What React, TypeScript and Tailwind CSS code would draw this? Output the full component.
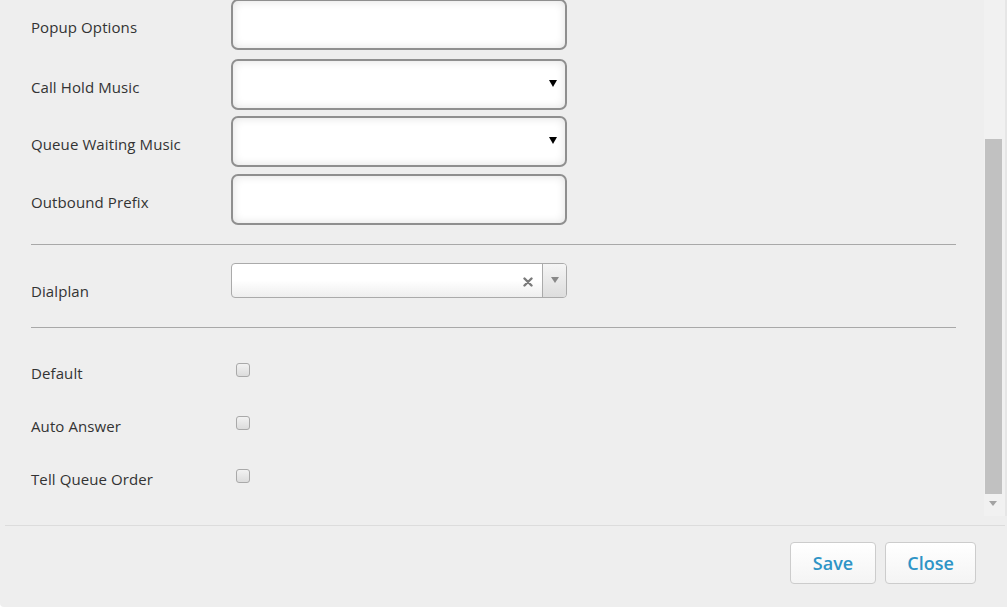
import React from 'react';

const font = { fontFamily: '"Open Sans", "Noto Sans", sans-serif' };

function Label({ children, className = '' }: { children: React.ReactNode; className?: string }) {
  return <div className={`w-[200px] shrink-0 text-[15px] tracking-[0.1px] text-[#333] ${className}`}>{children}</div>;
}

function TextBox({ arrow }: { arrow?: boolean }) {
  return (
    <div className="relative h-[51px] w-[336px] rounded-[7px] border-2 border-[#8f8f8f] bg-white shadow-[inset_0_0_10px_rgba(0,0,0,0.12)]">
      {arrow && (
        <span className="absolute right-[8px] top-[19px] h-0 w-0 border-x-[4px] border-t-[7px] border-x-transparent border-t-black" />
      )}
    </div>
  );
}

function FieldRow({ label, arrow, className = '' }: { label: string; arrow?: boolean; className?: string }) {
  return (
    <div className={`flex items-center ${className}`}>
      <Label className="pt-[5px]">{label}</Label>
      <TextBox arrow={arrow} />
    </div>
  );
}

function CheckRow({ label }: { label: string }) {
  return (
    <div className="flex h-[53px] items-start">
      <Label>{label}</Label>
      <span className="ml-[5px] mt-[1px] h-[14px] w-[14px] rounded-[3px] border border-[#a9a9a9] bg-gradient-to-b from-[#f2f2f2] to-[#dcdcdc]" />
    </div>
  );
}

export default function App() {
  return (
    <div className="h-[607px] w-[1007px] overflow-hidden rounded-bl-[4px] bg-[#eeeeee]" style={font}>
      <div className="flex h-[516px]">
        <div className="flex-1 pl-[31px] pr-[28px]">
          <FieldRow label="Popup Options" className="-mt-[1px]" />
          <FieldRow label="Call Hold Music" arrow className="mt-[9px]" />
          <FieldRow label="Queue Waiting Music" arrow className="mt-[6px]" />
          <FieldRow label="Outbound Prefix" className="mt-[7px]" />
          <div className="mt-[19px] h-px bg-[#a8a8a8]" />
          <div className="mt-[18px] flex h-[42px] items-start">
            <Label className="pt-[17px]">Dialplan</Label>
            <div className="flex h-[35px] w-[336px] overflow-hidden rounded-[4px] border border-[#aaaaaa] bg-gradient-to-b from-white from-50% to-[#eeeeee]">
              <div className="flex flex-1 items-center justify-end pr-[9px] pt-[3px]">
                <svg width="10" height="10" viewBox="0 0 10 10">
                  <path d="M1.5 1.5 L8.5 8.5 M8.5 1.5 L1.5 8.5" stroke="#7a7a7a" strokeWidth="2.4" strokeLinecap="round" />
                </svg>
              </div>
              <div className="flex w-[24px] justify-center border-l border-[#aaaaaa] bg-gradient-to-b from-[#f5f5f5] to-[#dddddd] pt-[13px]">
                <span className="h-0 w-0 border-x-[4px] border-t-[6px] border-x-transparent border-t-[#888]" />
              </div>
            </div>
          </div>
          <div className="mt-[22px] h-px bg-[#a8a8a8]" />
          <div className="mt-[34px]">
            <CheckRow label="Default" />
            <CheckRow label="Auto Answer" />
            <CheckRow label="Tell Queue Order" />
          </div>
        </div>
        <div className="flex w-[21px] flex-col items-center bg-[#f1f1f1] pr-[3px]">
          <div className="mt-[139px] h-[355px] w-[17px] bg-[#c1c1c1]" />
          <span className="mt-[7px] h-0 w-0 border-x-[4px] border-t-[5px] border-x-transparent border-t-[#a3a3a3]" />
        </div>
        <div className="w-[2px] bg-[#e6e6e6]" />
      </div>
      <div className="ml-[5px] mr-[2px] mt-[9px] h-px bg-[#dcdcdc]" />
      <div className="flex justify-end gap-[9px] pr-[31px] pt-[16px]">
        <button className="h-[42px] w-[86px] rounded-[4px] border border-[#cccccc] bg-gradient-to-b from-white to-[#f4f4f4] text-[18px] font-semibold text-[#2e94c6]">
          Save
        </button>
        <button className="h-[42px] w-[91px] rounded-[4px] border border-[#cccccc] bg-gradient-to-b from-white to-[#f4f4f4] text-[18px] font-semibold text-[#2e94c6]">
          Close
        </button>
      </div>
    </div>
  );
}
